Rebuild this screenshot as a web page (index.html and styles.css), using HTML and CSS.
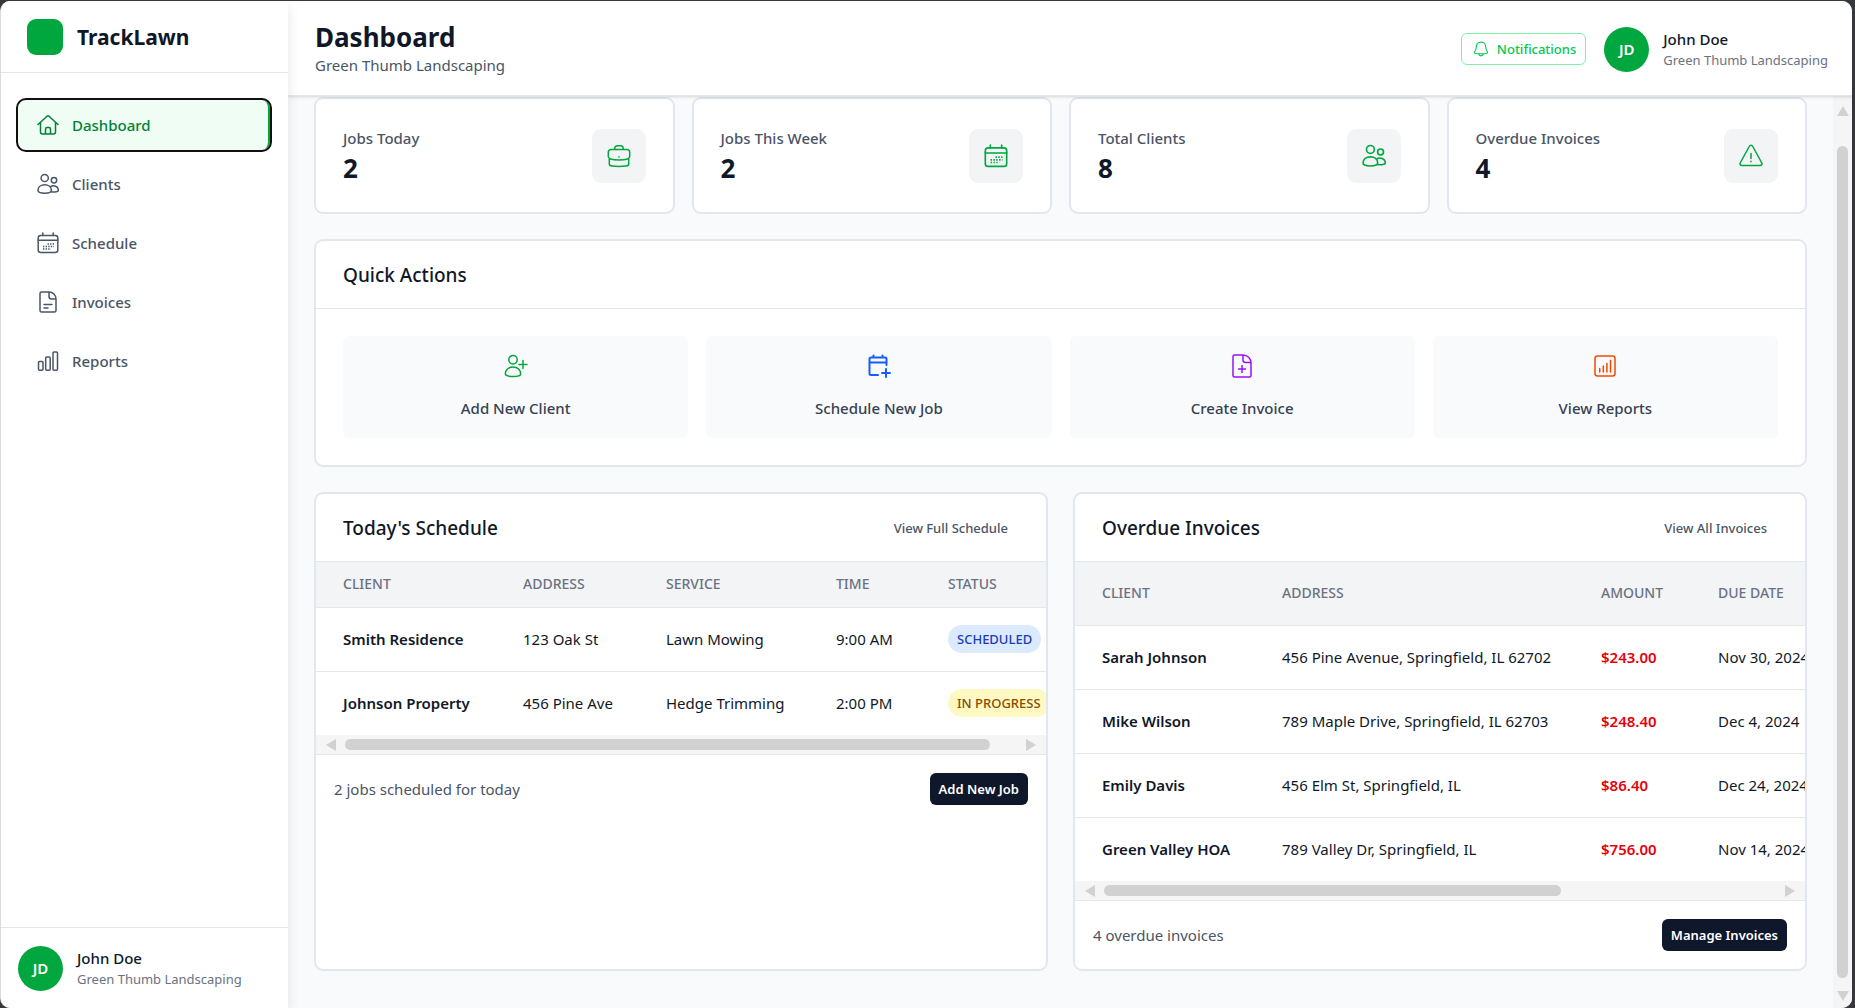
FILE: index.html
```html
<!DOCTYPE html>
<html lang="en">
<head>
<meta charset="utf-8">
<title>TrackLawn</title>
<link rel="stylesheet" href="styles.css">
</head>
<body>
<svg class="sprite" aria-hidden="true">
  <symbol id="home" viewBox="0 0 22 22"><path d="M1 10.500 10 2.300a1.500 1.500 0 0 1 2 0l9 8.200M3.500 8.500V18a2 2 0 0 0 2 2h11a2 2 0 0 0 2-2V8.500M8.500 20v-5a1.500 1.500 0 0 1 1.500-1.500h2a1.500 1.500 0 0 1 1.500 1.500v5"/></symbol>
  <symbol id="users" viewBox="0 0 22 22"><circle cx="7.700" cy="5" r="3.600"/><circle cx="17" cy="7.300" r="2.700"/><path d="M1 17.500c0-3.600 3-5.700 6.700-5.700s6.700 2.100 6.700 5.700c0 1.500-3 2.700-6.700 2.700S1 19 1 17.500Z"/><path d="M13.400 13.700c3.200-2 8-.3 8 3.600 0 1.400-3.600 2.100-7.200 1.500"/></symbol>
  <symbol id="calendar" viewBox="0 0 22 22"><rect x="1.200" y="3.500" width="19.600" height="17" rx="2.500"/><path d="M1.200 8.200h19.600M5.800 3.500V1M16.200 3.500V1"/><path class="dots" d="M10.500 12h6.500M6 14.500h11M6 17h8"/></symbol>
  <symbol id="invoice" viewBox="0 0 22 22"><path d="M3 2.500A1.500 1.500 0 0 1 4.500 1H12a7 7 0 0 1 7 7v11.500a1.500 1.500 0 0 1-1.500 1.500h-13A1.500 1.500 0 0 1 3 19.500ZM12 1v4.500A2.500 2.500 0 0 0 14.500 8H19M7 13.500h8M7 17h4"/></symbol>
  <symbol id="bars" viewBox="0 0 22 22"><rect x="1.500" y="11.500" width="4.500" height="8.800" rx="1"/><rect x="8.700" y="7" width="4.500" height="13.300" rx="1"/><rect x="16" y="2" width="4.500" height="18.300" rx="1"/></symbol>
  <symbol id="bell" viewBox="0 0 22 22"><path d="M11 1.500c-4 0-6.500 3-6.500 6.500 0 5-2.500 6-2.500 8 0 1 4 1.500 9 1.500s9-.5 9-1.500c0-2-2.500-3-2.500-8 0-3.500-2.500-6.500-6.500-6.500ZM7.500 17.500c.5 2 1.700 3 3.500 3s3-1 3.500-3"/></symbol>
  <symbol id="briefcase" viewBox="0 0 24 24"><path d="M4 5.500h16a2.700 2.700 0 0 1 2.700 2.700v4.300c0 2.300-4.700 3.500-10.700 3.500S1.300 14.800 1.300 12.500V8.200A2.700 2.700 0 0 1 4 5.500ZM2.300 14.700v5c0 1.400 1.200 2.200 2.700 2.400 4.500.6 9.500.6 14 0 1.500-.2 2.700-1 2.700-2.400v-5M7.500 5.500C7.700 3 8.700 1.700 10.500 1.700h3c1.800 0 2.800 1.300 3 3.800M12 12.700v.4"/></symbol>
  <symbol id="warning" viewBox="0 0 24 24"><path d="M10.200 2.500a2 2 0 0 1 3.600 0l9 16.500a1.700 1.700 0 0 1-1.500 2.500H2.700A1.700 1.700 0 0 1 1.200 19ZM12 9.500v5M12 17.300v.4"/></symbol>
  <symbol id="user-plus" viewBox="0 0 24 24"><circle cx="9" cy="5.700" r="4.200"/><path d="M1.300 20c0-4 3-7 7.700-7s7.700 3 7.700 7c0 1.500-3.200 2.500-7.700 2.500S1.300 21.500 1.300 20ZM19 6.500v8M15 10.500h8"/></symbol>
  <symbol id="calendar-plus" viewBox="0 0 24 24"><path d="M11 21H4a1.500 1.500 0 0 1-1.500-1.500V5A1.500 1.500 0 0 1 4 3.500h14A1.500 1.500 0 0 1 19.500 5v6M2.500 8.500h17M6.500 3V1.500M15.500 3V1.500M19 15v8M15 19h8"/></symbol>
  <symbol id="file-plus" viewBox="0 0 24 24"><path d="M3 2.500A1.500 1.500 0 0 1 4.500 1H13a8 8 0 0 1 8 8v12.500a1.500 1.500 0 0 1-1.500 1.500h-15A1.500 1.500 0 0 1 3 21.500ZM13 1v5a2.500 2.500 0 0 0 2.500 2.500H21M12 11.500v7M8.500 15h7"/></symbol>
  <symbol id="chart" viewBox="0 0 24 24"><rect x="2" y="2" width="20" height="20" rx="2.500"/><path d="M6.700 14.500V18M10.300 12v6M13.900 9.500V18M17.500 6.500V18"/></symbol>
</svg>
<div class="app">
  <aside class="sidebar">
    <div class="brand"><span class="logo"></span><span class="brand-name">TrackLawn</span></div>
    <nav class="nav">
      <a class="nav-item active" href="#"><svg class="icon"><use href="#home"/></svg>Dashboard</a>
      <a class="nav-item" href="#"><svg class="icon"><use href="#users"/></svg>Clients</a>
      <a class="nav-item" href="#"><svg class="icon"><use href="#calendar"/></svg>Schedule</a>
      <a class="nav-item" href="#"><svg class="icon"><use href="#invoice"/></svg>Invoices</a>
      <a class="nav-item" href="#"><svg class="icon"><use href="#bars"/></svg>Reports</a>
    </nav>
    <div class="user user-side">
      <span class="avatar">JD</span>
      <div class="user-text"><div class="user-name">John Doe</div><div class="user-org">Green Thumb Landscaping</div></div>
    </div>
  </aside>
  <div class="page">
    <header class="topbar">
      <div><h1>Dashboard</h1><p class="subtitle">Green Thumb Landscaping</p></div>
      <div class="topbar-right">
        <button class="notify" type="button"><svg class="icon-small"><use href="#bell"/></svg>Notifications</button>
        <div class="user">
          <span class="avatar">JD</span>
          <div><div class="user-name">John Doe</div><div class="user-org">Green Thumb Landscaping</div></div>
        </div>
      </div>
    </header>
    <div class="body">
      <main class="content">
        <section class="stats">
          <div class="card stat"><div><div class="stat-label">Jobs Today</div><div class="stat-value">2</div></div><span class="stat-icon"><svg class="icon-large"><use href="#briefcase"/></svg></span></div>
          <div class="card stat"><div><div class="stat-label">Jobs This Week</div><div class="stat-value">2</div></div><span class="stat-icon"><svg class="icon-large"><use href="#calendar"/></svg></span></div>
          <div class="card stat"><div><div class="stat-label">Total Clients</div><div class="stat-value">8</div></div><span class="stat-icon"><svg class="icon-large"><use href="#users"/></svg></span></div>
          <div class="card stat"><div><div class="stat-label">Overdue Invoices</div><div class="stat-value">4</div></div><span class="stat-icon"><svg class="icon-large"><use href="#warning"/></svg></span></div>
        </section>
        <section class="card">
          <div class="card-head"><h2>Quick Actions</h2></div>
          <div class="actions">
            <button class="action" type="button"><svg class="icon-large green"><use href="#user-plus"/></svg>Add New Client</button>
            <button class="action" type="button"><svg class="icon-large blue"><use href="#calendar-plus"/></svg>Schedule New Job</button>
            <button class="action" type="button"><svg class="icon-large purple"><use href="#file-plus"/></svg>Create Invoice</button>
            <button class="action" type="button"><svg class="icon-large orange"><use href="#chart"/></svg>View Reports</button>
          </div>
        </section>
        <section class="panels">
          <div class="card">
            <div class="card-head"><h2>Today's Schedule</h2><a class="head-link" href="#">View Full Schedule</a></div>
            <div class="table-wrap">
              <table class="schedule">
                <colgroup><col class="c-client"><col class="c-place"><col class="c-service"><col class="c-time"><col class="c-status"></colgroup>
                <thead><tr><th>CLIENT</th><th>ADDRESS</th><th>SERVICE</th><th>TIME</th><th>STATUS</th></tr></thead>
                <tbody>
                  <tr><td class="strong">Smith Residence</td><td>123 Oak St</td><td>Lawn Mowing</td><td>9:00 AM</td><td><span class="badge scheduled">SCHEDULED</span></td></tr>
                  <tr><td class="strong">Johnson Property</td><td>456 Pine Ave</td><td>Hedge Trimming</td><td>2:00 PM</td><td><span class="badge progress">IN PROGRESS</span></td></tr>
                </tbody>
              </table>
            </div>
            <div class="hbar"><i class="arrow left"></i><div class="track"><div class="thumb" style="width:96%"></div></div><i class="arrow right"></i></div>
            <div class="card-foot"><span>2 jobs scheduled for today</span><button class="primary" type="button">Add New Job</button></div>
          </div>
          <div class="card">
            <div class="card-head"><h2>Overdue Invoices</h2><a class="head-link" href="#">View All Invoices</a></div>
            <div class="table-wrap">
              <table class="overdue">
                <colgroup><col class="c-client"><col class="c-address"><col class="c-amount"><col class="c-due"></colgroup>
                <thead><tr><th>CLIENT</th><th>ADDRESS</th><th>AMOUNT</th><th>DUE DATE</th></tr></thead>
                <tbody>
                  <tr><td class="strong">Sarah Johnson</td><td>456 Pine Avenue, Springfield, IL 62702</td><td class="amount">$243.00</td><td>Nov 30, 2024</td></tr>
                  <tr><td class="strong">Mike Wilson</td><td>789 Maple Drive, Springfield, IL 62703</td><td class="amount">$248.40</td><td>Dec 4, 2024</td></tr>
                  <tr><td class="strong">Emily Davis</td><td>456 Elm St, Springfield, IL</td><td class="amount">$86.40</td><td>Dec 24, 2024</td></tr>
                  <tr><td class="strong">Green Valley HOA</td><td>789 Valley Dr, Springfield, IL</td><td class="amount">$756.00</td><td>Nov 14, 2024</td></tr>
                </tbody>
              </table>
            </div>
            <div class="hbar"><i class="arrow left"></i><div class="track"><div class="thumb" style="width:68%"></div></div><i class="arrow right"></i></div>
            <div class="card-foot"><span>4 overdue invoices</span><button class="primary" type="button">Manage Invoices</button></div>
          </div>
        </section>
      </main>
      <div class="vbar"><i class="arrow up"></i><div class="vthumb"></div><i class="arrow down"></i></div>
    </div>
  </div>
</div>
</body>
</html>
```
FILE: styles.css
```css
* { box-sizing: border-box; }
body { margin: 0; background: #36373b; color: #101828; font: 15px/24px "Segoe UI", "Noto Sans", sans-serif; }
h1, h2, p { margin: 0; }
a { color: inherit; text-decoration: none; }
button { font: inherit; cursor: pointer; }
.sprite { position: absolute; width: 0; height: 0; }
.app { display: flex; height: calc(100vh - 1px); margin: 1px 3px 0 0; border-left: 1px solid #d9dadc; border-radius: 10px; overflow: hidden; background: #f9fafb; }
svg { fill: none; stroke: currentColor; stroke-width: 1.500; stroke-linecap: round; stroke-linejoin: round; }
.dots { stroke-linecap: butt; stroke-dasharray: 1.400 1.200; }
.icon { width: 22px; height: 22px; }
.icon-small { width: 16px; height: 16px; }
.icon-large { width: 24px; height: 24px; }

.sidebar { display: flex; flex-direction: column; flex: none; width: 287px; background: #fff; box-shadow: 0 4px 12px rgba(0, 0, 0, .1); z-index: 2; }
.brand { display: flex; align-items: center; gap: 14px; height: 72px; padding: 0 26px; border-bottom: 1px solid #e5e7eb; }
.logo { width: 36px; height: 36px; border-radius: 9px; background: #00a63e; }
.brand-name { font-size: 21px; font-weight: 700; }
.nav { display: flex; flex-direction: column; gap: 9px; flex: 1; padding: 27px 18px 0 17px; }
.nav-item { display: flex; align-items: center; gap: 13px; height: 50px; padding: 0 18px 0 19px; border-radius: 8px; color: #4a5565; font-weight: 500; }
.nav-item.active { background: #f0fdf4; color: #008236; border-right: 2px solid #00a63e; outline: 2px solid #101010; }
.user { display: flex; align-items: center; gap: 14px; line-height: 21px; padding-top: 1px; }
.user-side { height: 81px; padding: 1px 17px 0; border-top: 1px solid #e5e7eb; }
.avatar { display: flex; align-items: center; justify-content: center; width: 45px; height: 45px; border-radius: 50%; background: #00a63e; color: #fff; font-weight: 600; }
.user-name { font-weight: 500; }
.user-org { font-size: 13px; color: #6a7282; }

.page { display: flex; flex-direction: column; flex: 1; min-width: 0; }
.topbar { display: flex; flex: none; align-items: center; justify-content: space-between; height: 95px; padding: 2px 24px 0 27px; background: #fff; border-bottom: 1px solid #e5e7eb; box-shadow: 0 1px 3px rgba(0, 0, 0, .15); z-index: 1; }
h1 { font-size: 26px; line-height: 32px; font-weight: 700; }
.subtitle { color: #4a5565; }
.topbar-right { display: flex; align-items: center; gap: 18px; }
.notify { display: flex; align-items: center; gap: 8px; height: 32px; padding: 0 9px 0 11px; border: 1px solid #7bf1a8; border-radius: 6px; background: #fff; color: #00c950; font-size: 13px; font-weight: 500; }
.body { display: flex; flex: 1; min-height: 0; }
.content { display: flex; flex-direction: column; gap: 25px; flex: 1; min-width: 0; padding: 1px 26px 0; overflow: hidden; }

.card { display: flex; flex-direction: column; min-width: 0; background: #fff; border: 2px solid #e2e6ee; border-radius: 9px; overflow: hidden; }
.stats { display: grid; grid-template-columns: repeat(4, 1fr); gap: 17px; }
.stat { flex-direction: row; align-items: center; justify-content: space-between; height: 117px; padding: 0 27px; }
.stat-label { color: #4a5565; font-weight: 500; }
.stat-value { font-size: 26px; line-height: 36px; font-weight: 700; }
.stat-icon { display: flex; align-items: center; justify-content: center; width: 54px; height: 54px; border-radius: 9px; background: #f3f4f6; color: #00a63e; }
.card-head { display: flex; align-items: center; justify-content: space-between; height: 68px; padding: 0 38px 0 27px; border-bottom: 1px solid #e2e8f0; }
h2 { font-size: 19px; font-weight: 500; }
.head-link { font-size: 13px; font-weight: 500; color: #4a5565; }
.actions { display: grid; grid-template-columns: repeat(4, 1fr); gap: 18px; padding: 27px; }
.action { display: flex; flex-direction: column; align-items: center; gap: 18px; padding: 18px; border: 0; border-radius: 6px; background: #f9fafb; color: #364153; font-weight: 500; }
.green { color: #00a63e; }
.blue { color: #155dfc; stroke-width: 2; }
.purple { color: #9810fa; }
.orange { color: #f54900; }

.panels { display: grid; grid-template-columns: 1fr 1fr; gap: 25px; }
.table-wrap { overflow: hidden; }
table { table-layout: fixed; border-collapse: collapse; white-space: nowrap; }
.schedule { width: 770px; }
.overdue { width: 786px; }
.c-client { width: 180px; }
.c-place { width: 143px; }
.c-service { width: 170px; }
.c-time { width: 112px; }
.c-address { width: 319px; }
.c-amount { width: 117px; }
th, td { padding: 0 0 0 27px; text-align: left; }
th { height: 45px; background: #f3f4f6; color: #6a7282; font-size: 14px; font-weight: 500; }
.overdue th { height: 63px; }
td { height: 64px; }
thead tr, tbody tr { border-bottom: 1px solid #e5e7eb; }
tbody tr:last-child { border-bottom: 0; }
.strong { font-weight: 600; }
.amount { color: #e7000b; font-weight: 600; }
.badge { display: inline-block; padding: 2px 9px; border-radius: 14px; font-size: 13px; font-weight: 500; }
.scheduled { background: #dbeafe; color: #193cb8; }
.progress { background: #fef9c2; color: #894b00; }
.hbar { display: flex; align-items: center; gap: 9px; height: 19px; padding: 0 10px; background: #f5f5f5; }
.track { flex: 1; }
.thumb { height: 11px; border-radius: 6px; background: #d1d1d1; }
.arrow { border: 6px solid transparent; }
.arrow.left { border-left: 0; border-right: 10px solid #d1d1d1; }
.arrow.right { border-right: 0; border-left: 10px solid #d1d1d1; }
.arrow.up { border-top: 0; border-bottom: 10px solid #d1d1d1; }
.arrow.down { border-bottom: 0; border-top: 10px solid #d1d1d1; }
.card-foot { display: flex; align-items: center; justify-content: space-between; padding: 18px; border-top: 1px solid #e5e7eb; color: #4a5565; }
.primary { height: 32px; padding: 0 9px; border: 0; border-radius: 6px; background: #0f172b; color: #fff; font-size: 13px; font-weight: 600; }
.vbar { display: flex; flex-direction: column; align-items: center; gap: 30px; width: 19px; padding: 10px 0 7px; background: #f5f5f5; }
.vbar .arrow.down { margin-top: -17px; }
.vthumb { flex: 1; width: 11px; border-radius: 6px; background: #d1d1d1; }
```
